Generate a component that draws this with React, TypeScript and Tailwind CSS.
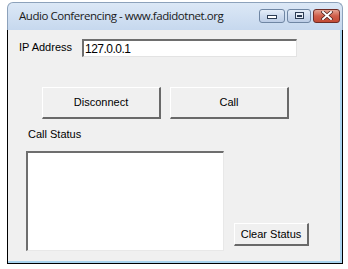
import React from "react";

const sans = { fontFamily: '"Liberation Sans", Arial, sans-serif' };

function TitleButton({ kind }: { kind: "min" | "max" | "close" }) {
  if (kind === "close") {
    return (
      <div className="w-[27px] h-[14px] rounded-[3px] border border-[#6e2b25] bg-gradient-to-b from-[#e3a393] via-[#cf5e4a] to-[#c24a35] flex items-center justify-center">
        <svg width="12" height="9" viewBox="0 0 12 9">
          <path d="M2 1 L10 8 M10 1 L2 8" stroke="#4a1d18" strokeWidth="3.4" strokeLinecap="square" />
          <path d="M2 1 L10 8 M10 1 L2 8" stroke="#ffffff" strokeWidth="2" strokeLinecap="square" />
        </svg>
      </div>
    );
  }
  return (
    <div className={`${kind === "min" ? "w-[26px]" : "w-[24px]"} h-[14px] rounded-[3px] border border-[#6f86a3] bg-gradient-to-b from-[#e4edf8] via-[#cddbee] to-[#bccde6] flex items-center justify-center`}>
      {kind === "min" ? (
        <div className="w-[10px] h-[4px] border border-[#2d3d54] bg-white mt-[3px]" />
      ) : (
        <div className="w-[9px] h-[7px] border border-[#2d3d54] bg-[#e8eef7] flex items-center justify-center">
          <div className="w-[5px] h-[2px] border-t-2 border-[#2d3d54]" />
        </div>
      )}
    </div>
  );
}

function RaisedButton({ label, w, h }: { label: string; w: string; h: string }) {
  return (
    <div
      className={`${w} ${h} bg-[#f0f0f0] border-t border-l border-r-2 border-b-2 border-t-white border-l-white border-r-[#696969] border-b-[#696969] flex items-center justify-center text-[11px] text-black`}
      style={sans}
    >
      {label}
    </div>
  );
}

export default function App() {
  return (
    <div className="w-[348px] h-[269px] bg-white pt-[2px] pl-[7px]">
      <div className="w-[336px] h-[262px] flex flex-col">
        <div className="h-[28px] rounded-t-[6px] border border-b-0 border-[#8da2bb] bg-gradient-to-b from-[#dce8f6] to-[#c6d8ee] flex items-center pl-[11px] pr-[2px]">
          <div className="flex-1 text-[11.5px] text-[#1a1a1a] -mt-[2px] tracking-[-0.45px]" style={{ fontFamily: '"Open Sans", "Noto Sans", sans-serif' }}>
            Audio Conferencing - www.fadidotnet.org
          </div>
          <div className="flex gap-[2px] -mt-[2px]">
            <TitleButton kind="min" />
            <TitleButton kind="max" />
            <TitleButton kind="close" />
          </div>
        </div>
        <div className="flex-1 border-l border-r border-b border-black flex flex-col">
          <div className="flex-1 bg-[#f0f0f0] border-r-2 border-b-2 border-[#a9d3ee] flex flex-col">
            <div className="flex items-center mt-[9px] h-[18px]">
              <div className="ml-[11px] w-[63px] text-[11px] text-black -mt-[2px]" style={sans}>
                IP Address
              </div>
              <div
                className="w-[215px] h-[18px] bg-white border-t-2 border-l-2 border-r border-b border-t-[#6e6e6e] border-l-[#6e6e6e] border-r-[#e3e3e3] border-b-[#e3e3e3] pl-[1px] text-[12px] leading-[16px] text-black tracking-[-0.5px]"
                style={sans}
              >
                127.0.0.1
              </div>
            </div>
            <div className="flex gap-[9px] ml-[34px] mt-[30px]">
              <RaisedButton label="Disconnect" w="w-[119px]" h="h-[32px]" />
              <RaisedButton label="Call" w="w-[119px]" h="h-[32px]" />
            </div>
            <div className="ml-[20px] mt-[9px] text-[11px] text-black h-[13px] leading-[13px]" style={sans}>
              Call Status
            </div>
            <div className="flex items-end ml-[18px] mt-[10px]">
              <div className="w-[198px] h-[100px] bg-white border-t-2 border-l-2 border-r border-b border-t-[#6e6e6e] border-l-[#6e6e6e] border-r-[#e8e8e8] border-b-[#e8e8e8]" />
              <div className="ml-[10px] mb-[5px]">
                <RaisedButton label="Clear Status" w="w-[75px]" h="h-[23px]" />
              </div>
            </div>
          </div>
        </div>
      </div>
    </div>
  );
}
